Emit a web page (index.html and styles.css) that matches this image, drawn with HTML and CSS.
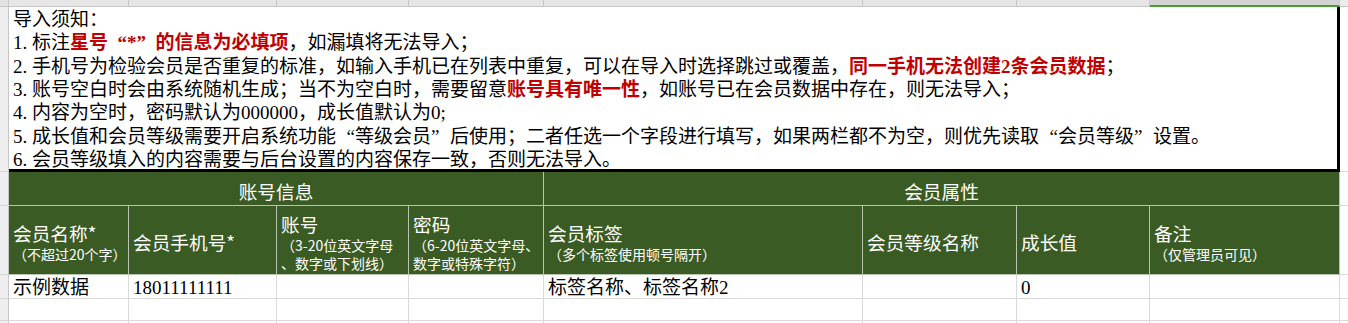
FILE: index.html
```html
<!DOCTYPE html>
<html lang="zh-CN">
<head>
<meta charset="utf-8">
<title>会员导入模板</title>
<link rel="stylesheet" href="styles.css">
</head>
<body>
<div class="sheet">
  <div class="colhead corner"></div>
  <div class="colhead"></div>
  <div class="colhead"></div>
  <div class="colhead"></div>
  <div class="colhead"></div>
  <div class="colhead"></div>
  <div class="colhead"></div>
  <div class="colhead"></div>
  <div class="colhead selected"></div>
  <div class="colhead rest"></div>

  <div class="rowhead"></div>
  <div class="notice">
    <p>导入须知：</p>
    <p><span class="num">1.</span>标注<b class="red">星号<span class="qo">“</span>*<span class="qc">”</span>的信息为必填项</b>，如漏填将无法导入；</p>
    <p><span class="num">2.</span>手机号为检验会员是否重复的标准，如输入手机已在列表中重复，可以在导入时选择跳过或覆盖，<b class="red">同一手机无法创建2条会员数据</b>；</p>
    <p><span class="num">3.</span>账号空白时会由系统随机生成；当不为空白时，需要留意<b class="red">账号具有唯一性</b>，如账号已在会员数据中存在，则无法导入；</p>
    <p><span class="num">4.</span>内容为空时，密码默认为000000，成长值默认为0;</p>
    <p><span class="num">5.</span>成长值和会员等级需要开启系统功能<span class="qo">“</span>等级会员<span class="qc">”</span>后使用；二者任选一个字段进行填写，如果两栏都不为空，则优先读取<span class="qo">“</span>会员等级<span class="qc">”</span>设置。</p>
    <p><span class="num">6.</span>会员等级填入的内容需要与后台设置的内容保存一致，否则无法导入。</p>
  </div>
  <div class="cell rest"></div>

  <div class="rowhead"></div>
  <div class="hd group">账号信息</div>
  <div class="hd group">会员属性</div>
  <div class="cell rest"></div>

  <div class="rowhead"></div>
  <div class="hd field"><span class="main">会员名称*</span><span class="sub">（不超过20个字）</span></div>
  <div class="hd field"><span class="main">会员手机号*</span></div>
  <div class="hd field"><span class="main">账号</span><span class="sub">（3-20位英文字母<br>、数字或下划线）</span></div>
  <div class="hd field"><span class="main">密码</span><span class="sub">（6-20位英文字母、<br>数字或特殊字符）</span></div>
  <div class="hd field"><span class="main">会员标签</span><span class="sub">（多个标签使用顿号隔开）</span></div>
  <div class="hd field"><span class="main">会员等级名称</span></div>
  <div class="hd field"><span class="main">成长值</span></div>
  <div class="hd field"><span class="main">备注</span><span class="sub">（仅管理员可见）</span></div>
  <div class="cell rest"></div>

  <div class="rowhead"></div>
  <div class="cell">示例数据</div>
  <div class="cell">18011111111</div>
  <div class="cell"></div>
  <div class="cell"></div>
  <div class="cell">标签名称、标签名称2</div>
  <div class="cell"></div>
  <div class="cell">0</div>
  <div class="cell"></div>
  <div class="cell rest"></div>

  <div class="rowhead"></div>
  <div class="cell"></div>
  <div class="cell"></div>
  <div class="cell"></div>
  <div class="cell"></div>
  <div class="cell"></div>
  <div class="cell"></div>
  <div class="cell"></div>
  <div class="cell"></div>
  <div class="cell rest"></div>

  <div class="rowhead"></div>
  <div class="cell"></div>
  <div class="cell"></div>
  <div class="cell"></div>
  <div class="cell"></div>
  <div class="cell"></div>
  <div class="cell"></div>
  <div class="cell"></div>
  <div class="cell"></div>
  <div class="cell rest"></div>
</div>
</body>
</html>
```
FILE: styles.css
```css
* {
  box-sizing: border-box;
}

html, body {
  margin: 0;
  padding: 0;
  background: #ffffff;
}

body {
  width: 1348px;
  height: 323px;
  overflow: hidden;
  font-family: "Liberation Serif", "Noto Sans CJK SC", serif;
  font-size: 19px;
  color: #000000;
}

.sheet {
  display: grid;
  grid-template-columns: 9px 120px 148px 132px 135px 319px 154px 133px 190px 1fr;
  grid-template-rows: 7px 165px 34px 69px 24px 22px 1fr;
  width: 1348px;
  height: 323px;
  overflow: hidden;
}

/* column header strip */
.colhead {
  background: #e6e6e6;
  border-right: 1px solid #c8c8c8;
  border-bottom: 1px solid #c6c6c6;
}

.colhead.corner {
  background: #e2e2e2;
}

.colhead.selected {
  background: #d3d3d3;
  border-bottom: 2px solid #4a9a2c;
}

.colhead.rest {
  background: #ececec;
  border-right: none;
}

/* row header strip */
.rowhead {
  background: #eeeeee;
  border-right: 1px solid #c6c6c6;
  border-bottom: 1px solid #d4d4d4;
}

/* notice block (merged cell) */
.notice {
  grid-column: 2 / 10;
  padding: 1px 4px 0 4px;
  border-right: 3px solid #000000;
  border-bottom: 3px solid #000000;
  white-space: nowrap;
  overflow: hidden;
}

.notice p {
  margin: 0;
  height: 23.33px;
  line-height: 23.33px;
}

.num {
  display: inline-block;
  width: 19px;
}

.red {
  color: #c00000;
  font-weight: bold;
}

.qo,
.qc {
  display: inline-block;
  width: 1em;
}

.qo {
  text-align: right;
}

.qc {
  text-align: left;
}

/* plain cells */
.cell {
  border-right: 1px solid #dadada;
  border-bottom: 1px solid #dadada;
  padding: 2px 4px 0 4px;
  line-height: 22px;
  white-space: nowrap;
  overflow: hidden;
}

.cell.rest {
  border-right: none;
}

/* green header */
.hd {
  background: #3b5b24;
  color: #ffffff;
  font-family: "Noto Sans CJK SC", sans-serif;
  font-size: 18.67px;
  border-right: 1px solid #b9c4b0;
  border-bottom: 1px solid #b9c4b0;
  white-space: nowrap;
  overflow: hidden;
}

.hd.group {
  grid-column: span 4;
  display: flex;
  align-items: center;
  justify-content: center;
  padding-top: 5px;
  line-height: 24px;
}

.hd.field {
  display: flex;
  flex-direction: column;
  justify-content: center;
  padding: 3px 4px 0 4px;
}

.hd .main {
  line-height: 24px;
}

.hd .sub {
  font-size: 14px;
  line-height: 18px;
}
```
